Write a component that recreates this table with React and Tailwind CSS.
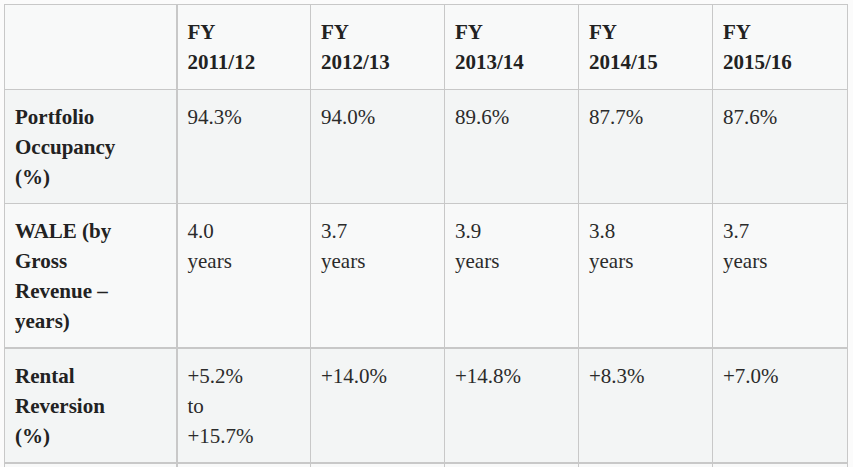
import React from 'react';

const years = ['2011/12', '2012/13', '2013/14', '2014/15', '2015/16'];

const rows = [
  {
    label: ['Portfolio', 'Occupancy', '(%)'],
    values: [['94.3%'], ['94.0%'], ['89.6%'], ['87.7%'], ['87.6%']],
    bg: 'bg-[#f3f5f5]',
    bottom: 'border-b',
  },
  {
    label: ['WALE (by', 'Gross', 'Revenue –', 'years)'],
    values: [['4.0', 'years'], ['3.7', 'years'], ['3.9', 'years'], ['3.8', 'years'], ['3.7', 'years']],
    bg: 'bg-[#f8f9f9]',
    bottom: 'border-b-2',
  },
  {
    label: ['Rental', 'Reversion', '(%)'],
    values: [['+5.2%', 'to', '+15.7%'], ['+14.0%'], ['+14.8%'], ['+8.3%'], ['+7.0%']],
    bg: 'bg-[#f3f5f5]',
    bottom: 'border-b-2',
  },
];

function Lines({ parts }) {
  return parts.map((p, i) => (
    <React.Fragment key={i}>
      {i > 0 && <br />}
      {p}
    </React.Fragment>
  ));
}

export default function App() {
  return (
    <div className="min-h-[467px] bg-[#fbfbfb] pl-1 pt-1 font-['Liberation_Serif',serif] text-[21px] leading-[30px] text-[#2b2b2b]">
      <table className="w-[843px] table-fixed border-collapse border border-[#c8c8c8]">
        <colgroup>
          <col className="w-[172px]" />
          <col className="w-[134px]" />
          <col className="w-[134px]" />
          <col className="w-[134px]" />
          <col className="w-[134px]" />
          <col className="w-[135px]" />
        </colgroup>
        <thead>
          <tr className="bg-[#f8f9f9]">
            <th className="border-b border-r-2 border-[#c8c8c8] px-[10px] pt-3 pb-3"></th>
            {years.map((y) => (
              <th key={y} className="border-b border-r border-[#c8c8c8] px-[10px] pt-3 pb-3 text-left align-top font-bold text-[#222]">
                FY
                <br />
                {y}
              </th>
            ))}
          </tr>
        </thead>
        <tbody>
          {rows.map((r, ri) => (
            <tr key={ri} className={r.bg}>
              <th className={`${r.bottom} border-r-2 border-[#c8c8c8] px-[10px] py-[11.5px] text-left align-top font-bold text-[#222]`}>
                <Lines parts={r.label} />
              </th>
              {r.values.map((v, vi) => (
                <td key={vi} className={`${r.bottom} border-r border-[#c8c8c8] px-[10px] py-[11.5px] align-top`}>
                  <Lines parts={v} />
                </td>
              ))}
            </tr>
          ))}
          <tr className="bg-[#f8f9f9]">
            <th className="border-r-2 border-[#c8c8c8] px-[10px] py-3 text-left align-top">&nbsp;</th>
            {years.map((y) => (
              <td key={y} className="border-r border-[#c8c8c8] px-[10px] py-3">&nbsp;</td>
            ))}
          </tr>
        </tbody>
      </table>
    </div>
  );
}
